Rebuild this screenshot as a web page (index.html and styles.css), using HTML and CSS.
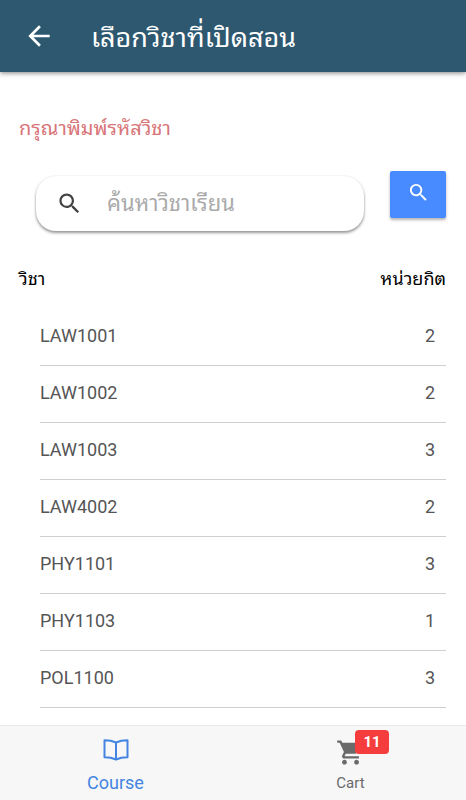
FILE: index.html
```html
<!DOCTYPE html>
<html lang="th">
	<head>
		<meta charset="utf-8">
		<meta name="viewport" content="width=device-width, initial-scale=1">
		<title>เลือกวิชาที่เปิดสอน</title>
		<link rel="stylesheet" href="styles.css">
	</head>
	<body>
		<header class="toolbar">
			<button class="back" type="button" aria-label="Back">
				<svg viewBox="0 0 24 24" width="32" height="32"><path fill="currentColor" d="M20 11H7.83l5.59-5.59L12 4l-8 8 8 8 1.41-1.41L7.83 13H20v-2z"/></svg>
			</button>
			<h1>เลือกวิชาที่เปิดสอน</h1>
		</header>

		<main class="content">
			<label class="hint" for="search">กรุณาพิมพ์รหัสวิชา</label>

			<form class="searchRow">
				<div class="searchBar">
					<svg viewBox="0 0 24 24" width="27" height="27"><path fill="currentColor" d="M15.5 14h-.79l-.28-.27A6.471 6.471 0 0 0 16 9.5 6.5 6.5 0 1 0 9.5 16c1.61 0 3.09-.59 4.23-1.57l.27.28v.79l5 4.99L20.49 19l-4.99-5zm-6 0C7.01 14 5 11.99 5 9.5S7.01 5 9.5 5 14 7.01 14 9.5 11.99 14 9.5 14z"/></svg>
					<input id="search" type="text" placeholder="ค้นหาวิชาเรียน">
				</div>
				<button class="searchButton" type="button" aria-label="ค้นหา">
					<svg viewBox="0 0 24 24" width="23" height="23"><path fill="currentColor" d="M15.5 14h-.79l-.28-.27A6.471 6.471 0 0 0 16 9.5 6.5 6.5 0 1 0 9.5 16c1.61 0 3.09-.59 4.23-1.57l.27.28v.79l5 4.99L20.49 19l-4.99-5zm-6 0C7.01 14 5 11.99 5 9.5S7.01 5 9.5 5 14 7.01 14 9.5 11.99 14 9.5 14z"/></svg>
				</button>
			</form>

			<table class="courses">
				<thead>
					<tr><th>วิชา</th><th>หน่วยกิต</th></tr>
				</thead>
				<tbody>
					<tr><td>LAW1001</td><td>2</td></tr>
					<tr><td>LAW1002</td><td>2</td></tr>
					<tr><td>LAW1003</td><td>3</td></tr>
					<tr><td>LAW4002</td><td>2</td></tr>
					<tr><td>PHY1101</td><td>3</td></tr>
					<tr><td>PHY1103</td><td>1</td></tr>
					<tr><td>POL1100</td><td>3</td></tr>
				</tbody>
			</table>
		</main>

		<nav class="tabs">
			<a class="tab active" href="#course">
				<svg viewBox="0 0 28 24" width="28" height="24"><path fill="none" stroke="currentColor" stroke-width="2" stroke-linejoin="round" d="M14 4.500C10.500 2.900 6.500 2.300 2.500 2.300v17c4 0 8 .6 11.500 2.200 3.500-1.600 7.500-2.200 11.500-2.200v-17c-4 0-8 .6-11.500 2.200zM14 4.500v17"/></svg>
				<span>Course</span>
			</a>
			<a class="tab" href="#cart">
				<span class="cartIcon">
					<svg viewBox="0 0 24 24" width="29" height="29"><path fill="currentColor" d="M7 18c-1.100 0-1.990.9-1.990 2S5.900 22 7 22s2-.9 2-2-.9-2-2-2zM1 2v2h2l3.600 7.590-1.350 2.450c-.16.280-.25.610-.25.960 0 1.100.9 2 2 2h12v-2H7.420c-.14 0-.25-.11-.25-.25l.03-.12.9-1.630h7.450c.75 0 1.410-.41 1.750-1.030l3.580-6.490A1 1 0 0 0 20 4H5.210l-.94-2H1zm16 16c-1.100 0-1.990.9-1.990 2s.89 2 1.990 2 2-.9 2-2-.9-2-2-2z"/></svg>
					<span class="badge">11</span>
				</span>
				<span>Cart</span>
			</a>
		</nav>
	</body>
</html>
```

FILE: styles.css
```css
*
{
	box-sizing: border-box;
}

body
{
	display: flex;
	flex-direction: column;
	height: 100vh;
	margin: 0;
	background: #fff;
	color: #000;
	font-family: Roboto, "Noto Sans Thai Looped", Loma, Waree, Garuda, "Noto Sans", sans-serif;
}

button
{
	padding: 0;
	border: 0;
	color: #fff;
}

svg
{
	display: block;
}

/* top bar */
.toolbar
{
	display: flex;
	align-items: center;
	gap: 36px;
	height: 72px;
	padding-left: 23px;
	background: #2d5870;
	color: #fff;
	box-shadow: 0 1px 5px rgba(0, 0, 0, 0.5);
}
.back
{
	background: none;
}
h1
{
	margin: 0;
	padding-top: 4px;
	font-size: 27px;
	font-weight: normal;
	line-height: 32px;
}

.content
{
	flex: 1;
	min-height: 0;
	padding: 44px 20px 0 19px;
	overflow: hidden;
}
.hint
{
	display: block;
	color: #d87579;
	font-size: 20px;
	line-height: 24px;
}

/* search */
.searchRow
{
	display: flex;
	align-items: flex-start;
	gap: 26px;
	margin-top: 31px;
	padding-left: 17px;
}
.searchBar
{
	display: flex;
	flex: 1;
	align-items: center;
	gap: 24px;
	min-width: 0;
	height: 55px;
	margin-top: 5px;
	padding: 0 20px;
	border-radius: 20px;
	color: #424242;
	box-shadow: 0 2px 3px rgba(0, 0, 0, 0.4), 0 0 2px rgba(0, 0, 0, 0.1);
}
.searchBar input
{
	flex: 1;
	min-width: 0;
	padding: 0;
	border: 0;
	outline: 0;
	background: none;
	font: inherit;
	font-size: 22px;
	line-height: 32px;
}
.searchBar input::placeholder
{
	color: #aaa;
}
.searchButton
{
	display: flex;
	justify-content: center;
	width: 56px;
	height: 47px;
	padding-top: 10px;
	border-radius: 2px;
	background: #488aff;
	box-shadow: 0 2px 3px rgba(0, 0, 0, 0.3);
}

/* course list, rows are inset from the headings */
.courses, .courses thead, .courses tbody
{
	display: block;
}
.courses
{
	margin-top: 36px;
}
.courses tr
{
	display: flex;
	justify-content: space-between;
}
.courses th
{
	padding: 0;
	font-size: 18px;
	font-weight: normal;
	line-height: 24px;
}
.courses thead
{
	margin-bottom: 18px;
}
.courses tbody tr
{
	margin-left: 21px;
	padding-right: 11px;
	border-bottom: 1px solid #cfcfcf;
}
.courses td
{
	padding: 15px 0 17px;
	color: #555;
	font-size: 18px;
	line-height: 24px;
}

/* bottom tabs */
.tabs
{
	display: flex;
	height: 75px;
	border-top: 1px solid #e8e8e8;
	background: #f7f7f7;
}
.tab
{
	display: flex;
	flex: 1;
	flex-direction: column;
	align-items: center;
	justify-content: space-between;
	padding: 12px 0 6px;
	color: #6a6a6a;
	font-size: 15px;
	line-height: 22px;
	text-decoration: none;
}
.tab.active
{
	padding-right: 4px;
	color: #4485e2;
	font-size: 18px;
}
.cartIcon
{
	position: relative;
}
.badge
{
	position: absolute;
	top: -8px;
	left: 19px;
	min-width: 34px;
	border-radius: 4px;
	background: #f53d3d;
	color: #fff;
	font-size: 15px;
	font-weight: bold;
	line-height: 24px;
	text-align: center;
}
```
